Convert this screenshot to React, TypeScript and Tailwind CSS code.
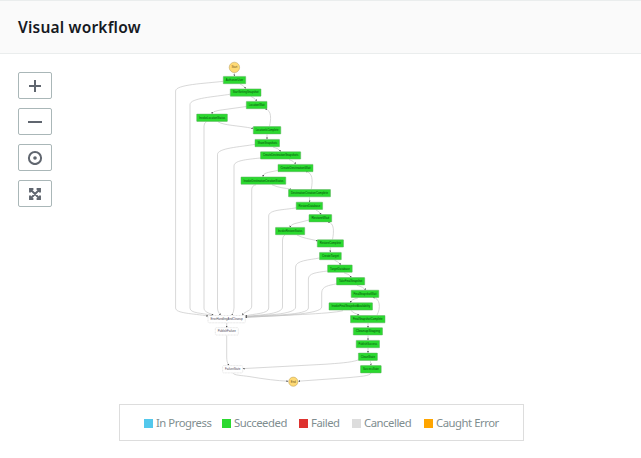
import type { ReactNode } from "react";

type StateNode = [left: number, right: number, y: number, label: string];

const succeeded: StateNode[] = [
  [223.3, 245.7, 80, "AuthorizeUser"],
  [230.3, 261, 92.5, "StartSettingSnapshot"],
  [246.3, 267, 105, "LocationWait"],
  [196.7, 227.4, 117.7, "InvokeLocationStatus"],
  [253.3, 280.8, 130.2, "LocationIsComplete"],
  [255, 279.5, 143, "ShareSnapshots"],
  [260.5, 300.7, 155.4, "CreateDestinationSnapshots"],
  [278, 313, 168, "CreateDestinationWait"],
  [241, 285.8, 180.6, "InvokeDestinationCreationStatus"],
  [288.5, 330.5, 193.1, "DestinationCreationComplete"],
  [296.2, 322.6, 205.8, "RestoreDatabase"],
  [309, 331.7, 218.2, "RestoreWait"],
  [275.5, 304.7, 231, "InvokeRestoreStatus"],
  [317.3, 343.5, 243.4, "RestoreComplete"],
  [319.5, 341.3, 256, "CreateTarget"],
  [327.6, 352.2, 268.6, "TargetDatabase"],
  [336.5, 364.7, 281.2, "TakeFinalSnapshot"],
  [351.2, 378.8, 293.8, "FinalSnapshotWait"],
  [329, 372.5, 306.4, "InvokeFinalSnapshotAvailability"],
  [350.5, 385, 319.1, "FinalSnapshotComplete"],
  [353.3, 382.5, 331.3, "CleanupStaging"],
  [356.2, 379.5, 344, "PublishSuccess"],
  [358.4, 377.4, 356.7, "CleanState"],
  [360.5, 381.2, 369.2, "SuccessState"],
];

const pending: StateNode[] = [
  [208, 245.3, 319.1, "ErrorHandlingAndCleanup"],
  [215.3, 238.3, 331.3, "PublishFailure"],
  [222.7, 242.7, 369.2, "FailureState"],
];

const arrows = [
  "M234.4 72.5V76",
  "M240 84Q244 85.5 245.5 88.5",
  "M251 96.5Q255 98 256.5 101",
  "M246.5 106.5L219 110.3Q212.5 111.3 212 113.7",
  "M218 121.8C224 125.5 238 125.5 253 128.4",
  "M269.5 126.2C271 120 272 110 265.3 109",
  "M267 134.4V139",
  "M273 147Q279 148.5 280.5 151.4",
  "M289 159.5Q294 161 295.5 164",
  "M277.7 170.5C267 172.5 263.5 173 263 176.5",
  "M272 184.8C279 188 285 188 291 189.2",
  "M311.3 189C313 180 312.5 172.5 306 171.6",
  "M309.5 197.3V202",
  "M316 210Q319.5 211.5 321 214.4",
  "M309 220L294 223.8Q290.5 225 290 227.2",
  "M297 235C302 238 310 239 317.5 240.8",
  "M332.5 239.4C334 232 334.5 222.8 328 222",
  "M330.3 247.5V252",
  "M334.5 260.2Q339 262 340.5 264.7",
  "M344 272.8Q350 274.2 351 277.3",
  "M357 285.3Q364 287 365.5 290",
  "M358 297.9Q351 299.5 350.6 302.5",
  "M351 310.6Q354 313.5 359 314.9",
  "M377 315C381 308 380 297.8 373 297.5",
  "M368 323.2V327.5",
  "M368 335.5V340",
  "M368 348V352.7",
  "M370.3 360.8L371 365.2",
  "M226.7 323V327.3",
  "M226.7 335.5V357C226.7 361 227.4 363.2 229 365.2",
  "M358.3 360C350 362.8 337 363.3 326 364.2L243 368.6",
  "M371 373C370 376.2 359 376.5 350 377.5L298.5 381.2",
  "M233 373.2C234 375.3 242 375.5 249 376.5Q272 380.5 288 381.2",
  "M223.3 81.3C205 83.5 175.6 84.5 175.6 91V308C175.6 313.5 193 313.5 208 316",
  "M230.3 94.2C215 96.8 190 98 190 104.5V308C190 313.4 202 313 212 315.3",
  "M206.5 121.8Q204 122.8 204 126V308C204 312 209 313 213.3 315",
  "M255.3 144.3C240 147 217.5 148 217.5 154.5V308C217.5 311 219 313 220.5 315",
  "M260.5 158C246 159.5 234 160.5 234 166V308Q234 312 231.8 315",
  "M256 184.8Q251.7 185.5 251.7 190V306C251.7 311 245 311 242.4 315",
  "M296.3 207.8C284 210 268.7 209.5 268.7 216V308C268.7 314 254 313.5 245.5 316",
  "M285 235Q282.5 236 282.5 240V307C282.5 314.5 257 315 245.5 316.5",
  "M319.4 258C309 260 295.6 260.5 295.6 267V307C295.6 315 262 315 245.5 316.7",
  "M327.2 271C317 272.5 308.4 273 308.4 279V308C308.4 315.5 267 315 245.5 317",
  "M336.5 283.8C329 285.5 321.7 286 321.7 293V307C321.7 314.5 275 316 245.5 317.2",
  "M343 310.7C330 314 280 315.3 245.5 317.4",
];

function StateBox({ node, done }: { node: StateNode; done?: boolean }) {
  const [left, right, y, label] = node;
  return (
    <g>
      <rect
        x={left}
        y={y - 3.6}
        width={right - left}
        height={7.3}
        rx={done ? 0.3 : 1}
        fill={done ? "#2bd92f" : "#ffffff"}
        stroke={done ? "#62b064" : "#cccccc"}
        strokeWidth={0.5}
        strokeDasharray={done ? undefined : "1 0.5"}
      />
      <text
        x={left + 2.4}
        y={y + 0.9}
        fontSize={2.8}
        textLength={right - left - 4.8}
        lengthAdjust="spacingAndGlyphs"
        fill={done ? "#03470a" : "#454052"}
      >
        {label}
      </text>
    </g>
  );
}

function Terminal({ x, y, r, label }: { x: number; y: number; r: number; label: string }) {
  return (
    <g>
      <circle cx={x} cy={y} r={r} fill="#ffda75" stroke="#b69b55" strokeWidth={0.5} />
      <text x={x} y={y + 0.9} fontSize={2.8} textAnchor="middle" fill="#6b4d15">
        {label}
      </text>
    </g>
  );
}

function Graph() {
  return (
    <svg
      className="block h-[335px] w-[230px] font-['Liberation_Sans',Arial,sans-serif]"
      viewBox="165 57 230 335"
    >
      <defs>
        <marker id="tip" viewBox="0 0 4 4" refX="3.2" refY="2" markerWidth="2" markerHeight="2" markerUnits="userSpaceOnUse" orient="auto">
          <path d="M0 0L4 2L0 4Z" fill="#555" />
        </marker>
      </defs>
      <g fill="none" stroke="#bdbdbd" strokeWidth={0.6}>
        {arrows.map((d) => (
          <path key={d} d={d} markerEnd="url(#tip)" />
        ))}
      </g>
      {succeeded.map((n) => (
        <StateBox key={n[3]} node={n} done />
      ))}
      {pending.map((n) => (
        <StateBox key={n[3]} node={n} />
      ))}
      <Terminal x={234.4} y={67.4} r={5.2} label="Start" />
      <Terminal x={293.3} y={381.7} r={4.6} label="End" />
    </svg>
  );
}

function ToolButton({ label, children }: { label: string; children: ReactNode }) {
  return (
    <button
      aria-label={label}
      className="flex h-[27px] w-[34px] items-center justify-center rounded-[2px] border border-[#aab7b8] bg-white"
    >
      <svg className="h-[15px] w-4" viewBox="0 0 16 15" fill="none" stroke="#60666f" strokeWidth={2}>
        {children}
      </svg>
    </button>
  );
}

function Legend({ color, label, width }: { color: string; label: string; width: string }) {
  return (
    <div className={`flex items-center gap-[3px] ${width}`}>
      <span className={`size-[9px] shrink-0 ${color}`} />
      <span className="whitespace-nowrap">{label}</span>
    </div>
  );
}

export default function App() {
  return (
    <div className="flex h-[458px] w-[641px] flex-col overflow-hidden bg-white font-['Noto_Sans','Open_Sans',sans-serif]">
      <header className="flex h-[54px] shrink-0 items-center border-y border-[#eaeded] bg-[#fafafa] pt-px pl-[18px]">
        <h2 className="text-[15.5px] font-semibold tracking-[0.2px] text-[#16191f]">Visual workflow</h2>
      </header>
      <main className="flex h-[350px] shrink-0 pt-[3px]">
        <div className="flex w-[165px] shrink-0 flex-col gap-[9px] pt-[15px] pl-[18px]">
          <ToolButton label="Zoom in">
            <path d="M2 8H14M8 2V14" />
          </ToolButton>
          <ToolButton label="Zoom out">
            <path d="M1 8H15" />
          </ToolButton>
          <ToolButton label="Center">
            <circle cx="8" cy="8" r="6.1" />
            <circle cx="8" cy="8" r="1.8" fill="#60666f" stroke="none" />
          </ToolButton>
          <ToolButton label="Fit">
            <path d="M3 9.6V13H6.4M9.6 13H13V9.6M13 6.4V3H9.6M6.4 3H3V6.4M3 3L13 13M13 3L3 13" strokeWidth={1.9} />
          </ToolButton>
        </div>
        <Graph />
      </main>
      <div className="ml-[119px] flex h-[37px] w-[405px] shrink-0 items-center border border-[#dddddd] pt-[2px] pl-6 text-[11.3px] tracking-[-0.46px] text-[#7f8e90]">
        <Legend color="bg-[#53c8ec]" label="In Progress" width="w-[78px]" />
        <Legend color="bg-[#2bd92f]" label="Succeeded" width="w-[77px]" />
        <Legend color="bg-[#de322f]" label="Failed" width="w-[53px]" />
        <Legend color="bg-[#dddddd]" label="Cancelled" width="w-[72px]" />
        <Legend color="bg-[#ffa500]" label="Caught Error" width="w-[80px]" />
      </div>
    </div>
  );
}
